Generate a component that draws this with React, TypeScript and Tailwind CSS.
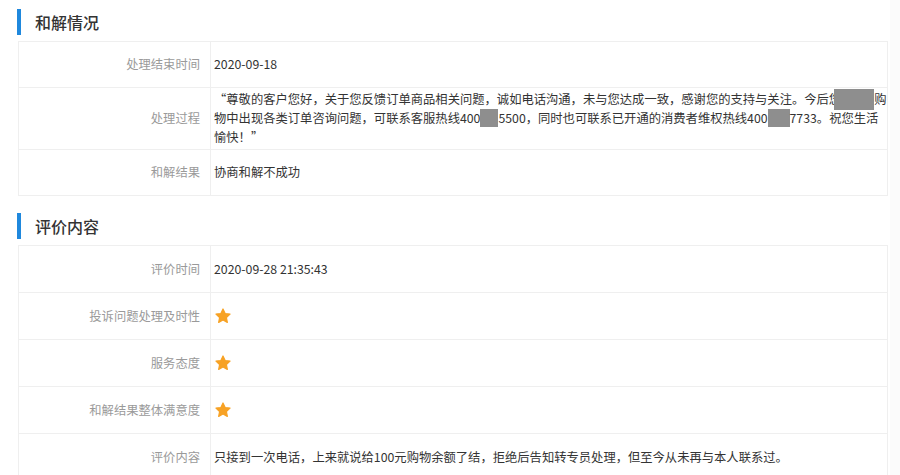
import React from "react";

function Star() {
  return (
    <svg width="18" height="18" viewBox="0 0 24 24" className="block">
      <path
        d="M12 2.6l2.85 6.05 6.55.8-4.85 4.55 1.25 6.5L12 17.3l-5.8 3.2 1.25-6.5L2.6 9.45l6.55-.8z"
        fill="#f7a225"
        stroke="#f7a225"
        strokeWidth="1.6"
        strokeLinejoin="round"
      />
    </svg>
  );
}

function Row({
  label,
  children,
  h = "min-h-[46px]",
}: {
  label: string;
  children: React.ReactNode;
  h?: string;
}) {
  return (
    <div className={`flex border-b border-[#efefef] ${h}`}>
      <div className="w-[192px] shrink-0 border-r border-[#efefef] flex items-center justify-end pr-[10px] text-[#9a9a9a]">
        {label}
      </div>
      <div className="flex-1 flex items-center pl-[3px] py-[2px] text-[#333]">{children}</div>
    </div>
  );
}

function Heading({ title }: { title: string }) {
  return (
    <div className="flex items-center h-[26px]">
      <div className="w-[4px] h-[26px] bg-[#1f88dd] -ml-[1px]" />
      <div className="ml-[14px] text-[16px] font-medium text-[#333] leading-none">{title}</div>
    </div>
  );
}

export default function App() {
  return (
    <div className="w-[900px] h-[475px] overflow-hidden bg-white flex font-['Noto_Sans_CJK_SC',sans-serif] text-[12.3px] leading-[19px]">
      <div className="w-[890px] shrink-0 pl-[18px] pr-[2px] pt-[9px]">
        <Heading title="和解情况" />
        <div className="mt-[6px] border-t border-l border-r border-[#efefef]">
          <Row label="处理结束时间">2020-09-18</Row>
          <Row label="处理过程">
            <div className="whitespace-nowrap leading-[19px]">
              <div className="h-[19px]">
                “尊敬的客户您好，关于您反馈订单商品相关问题，诚如电话沟通，未与您达成一致，感谢您的支持与关注。今后您
                <span className="inline-block w-[40px] h-[21px] align-top relative -top-[1px] bg-[#8e8e8e] -ml-[7px]" />购
              </div>
              <div className="h-[19px]">
                物中出现各类订单咨询问题，可联系客服热线400
                <span className="inline-block w-[18px] h-[18px] align-top bg-[#8e8e8e]" />
                5500，同时也可联系已开通的消费者维权热线400
                <span className="inline-block w-[22px] h-[18px] align-top bg-[#8e8e8e]" />
                7733。祝您生活
              </div>
              <div className="h-[19px]">愉快！”</div>
            </div>
          </Row>
          <Row label="和解结果">协商和解不成功</Row>
        </div>
        <div className="mt-[17px]">
          <Heading title="评价内容" />
        </div>
        <div className="mt-[6px] border-t border-l border-r border-[#efefef]">
          <Row label="评价时间" h="min-h-[47px]">2020-09-28 21:35:43</Row>
          <Row label="投诉问题处理及时性" h="min-h-[47px]">
            <Star />
          </Row>
          <Row label="服务态度" h="min-h-[47px]">
            <Star />
          </Row>
          <Row label="和解结果整体满意度" h="min-h-[47px]">
            <Star />
          </Row>
          <Row label="评价内容" h="min-h-[47px]">
            只接到一次电话，上来就说给100元购物余额了结，拒绝后告知转专员处理，但至今从未再与本人联系过。
          </Row>
        </div>
      </div>
      <div className="flex-1 bg-[#fbfbfb]" />
    </div>
  );
}
